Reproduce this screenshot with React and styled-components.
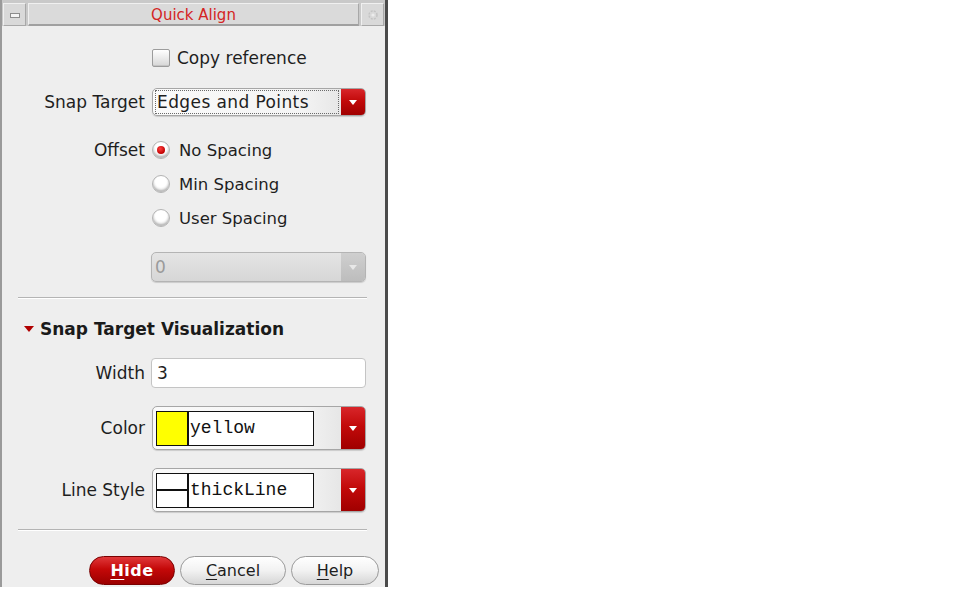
import React from "react";
import styled, { createGlobalStyle, css } from "styled-components";

const Global = createGlobalStyle`
  html, body { margin: 0; padding: 0; background: #ffffff; }
  body { font-family: "DejaVu Sans", "Noto Sans", sans-serif; }
`;

const Window = styled.div`
  box-sizing: border-box;
  width: 388px;
  height: 587px;
  display: flex;
  flex-direction: column;
  background: #c9c9c9;
  border-left: 2px solid #9a9a9a;
  border-right: 3px solid #4b4b4b;
  padding-top: 3px;
`;

const TitleBar = styled.div`
  display: flex;
  gap: 2px;
  height: 23px;
  padding: 0 1px 0 1px;
  background: #c9c9c9;
`;

const TitleButton = styled.div`
  box-sizing: border-box;
  width: 23px;
  display: flex;
  align-items: center;
  justify-content: center;
  background: #d9d9d9;
  border-top: 1px solid #f0f0f0;
  border-left: 1px solid #f0f0f0;
  border-right: 1px solid #a8a8a8;
  border-bottom: 1px solid #a8a8a8;
`;

const MinGlyph = styled.div`
  width: 8px;
  height: 3px;
  background: #f4f4f4;
  border: 1px solid #8c8c8c;
  margin-top: 2px;
`;

const TitleText = styled.div`
  box-sizing: border-box;
  flex: 1;
  display: flex;
  align-items: center;
  justify-content: center;
  background: #dadada;
  border-top: 1px solid #f0f0f0;
  border-left: 1px solid #f0f0f0;
  border-right: 1px solid #a8a8a8;
  border-bottom: 2px solid #a0a0a0;
  color: #d42424;
  font-size: 15px;
  padding-top: 1px;
`;

const Body = styled.div`
  flex: 1;
  display: flex;
  flex-direction: column;
  background: #eeeeee;
  color: #1e1e1e;
  font-size: 17px;
`;

const FormRow = styled.div`
  display: grid;
  grid-template-columns: 143px 214px;
  column-gap: 7px;
  align-items: center;
  margin-top: ${(p) => p.$mt}px;
`;

const Label = styled.div`
  text-align: right;
  white-space: nowrap;
  color: #1e1e1e;
`;

const CheckLabel = styled.label`
  display: flex;
  align-items: center;
  gap: 7px;
  height: 18px;
  white-space: nowrap;
`;

const CheckBox = styled.span`
  box-sizing: border-box;
  width: 18px;
  height: 18px;
  border: 1px solid #9c9c9c;
  border-radius: 2px;
  background: linear-gradient(#ffffff, #d6d6d6);
  box-shadow: inset 0 -1px 0 #c4c4c4;
`;

const RadioLabel = styled.label`
  display: flex;
  align-items: center;
  gap: 9px;
  height: 20px;
  white-space: nowrap;
  font-size: 16.5px;
`;

const RadioDot = styled.span`
  box-sizing: border-box;
  width: 18px;
  height: 18px;
  border-radius: 50%;
  border: 1px solid #b4b4b4;
  background: radial-gradient(circle at 50% 35%, #ffffff 40%, #dcdcdc 100%);
  box-shadow: inset 0 -2px 2px #b8b8b8;
  display: flex;
  align-items: center;
  justify-content: center;
  ${(p) =>
    p.$checked &&
    css`
      &::after {
        content: "";
        width: 8px;
        height: 8px;
        border-radius: 50%;
        background: radial-gradient(circle at 40% 35%, #ff4040, #c00000 70%);
      }
    `}
`;

const Combo = styled.div`
  box-sizing: border-box;
  width: ${(p) => p.$w || 214}px;
  height: ${(p) => p.$h}px;
  display: flex;
  border: 1px solid ${(p) => (p.$disabled ? "#b4b4b4" : "#a6a6a6")};
  border-radius: 5px;
  overflow: hidden;
  background: ${(p) =>
    p.$disabled
      ? "linear-gradient(#e4e4e4, #d6d6d6)"
      : "linear-gradient(90deg, #fafafa 0%, #f4f4f4 70%, #dedede 100%)"};
  box-shadow: 0 1px 1px rgba(0, 0, 0, 0.15);
`;

const ComboField = styled.div`
  flex: 1;
  display: flex;
  align-items: center;
  padding: 0 2px 0 3px;
  min-width: 0;
  color: ${(p) => (p.$disabled ? "#9a9a9a" : "#1e1e1e")};
`;

const FocusRect = styled.div`
  box-sizing: border-box;
  flex: 1;
  height: 24px;
  display: flex;
  align-items: center;
  border: 1px dotted #6a6a6a;
  margin-left: -1px;
  padding-left: 1px;
  letter-spacing: 0.4px;
  white-space: nowrap;
`;

const ComboArrow = styled.div`
  width: 24px;
  display: flex;
  align-items: center;
  justify-content: center;
  background: ${(p) =>
    p.$disabled
      ? "linear-gradient(#cfcfcf, #bdbdbd)"
      : "linear-gradient(#d8262a 0%, #c20a0a 45%, #a00000 100%)"};
  &::after {
    content: "";
    width: 0;
    height: 0;
    border-left: 4px solid transparent;
    border-right: 4px solid transparent;
    border-top: 5px solid ${(p) => (p.$disabled ? "#e8e8e8" : "#ffffff")};
  }
`;

const ValueBox = styled.div`
  box-sizing: border-box;
  width: 158px;
  height: 35px;
  display: flex;
  border: 1px solid #111111;
  background: #ffffff;
`;

const Swatch = styled.div`
  width: 30px;
  border-right: 2px solid #111111;
  background: ${(p) => p.$color || "transparent"};
  display: flex;
  align-items: center;
  &::after {
    content: "";
    display: ${(p) => (p.$line ? "block" : "none")};
    width: 100%;
    height: 2px;
    background: #111111;
  }
`;

const MonoText = styled.span`
  font-family: "Liberation Mono", "Courier New", monospace;
  font-size: 18px;
  color: #111111;
  align-self: center;
  padding-left: 1px;
`;

const TextInput = styled.div`
  box-sizing: border-box;
  width: 215px;
  height: 30px;
  margin-left: -1px;
  display: flex;
  align-items: center;
  padding-left: 5px;
  background: #ffffff;
  border: 1px solid #c4c4c4;
  border-radius: 4px;
  color: #1e1e1e;
`;

const Separator = styled.div`
  margin: ${(p) => p.$mt}px 18px 0 16px;
  border-top: 1px solid #b4b4b4;
  border-bottom: 1px solid #ffffff;
`;

const SectionHeader = styled.div`
  display: flex;
  align-items: center;
  gap: 6px;
  height: 20px;
  margin-top: ${(p) => p.$mt}px;
  padding-left: 22px;
  font-weight: bold;
  color: #1a1a1a;
  &::before {
    content: "";
    width: 0;
    height: 0;
    border-left: 5px solid transparent;
    border-right: 5px solid transparent;
    border-top: 6px solid #b00000;
    margin-top: -1px;
  }
`;

const ButtonBar = styled.div`
  display: flex;
  justify-content: flex-end;
  gap: 5px;
  padding-right: 6px;
  margin-top: ${(p) => p.$mt}px;
`;

const PillButton = styled.button`
  box-sizing: border-box;
  width: ${(p) => p.$w}px;
  height: 29px;
  border-radius: 15px;
  font-family: "DejaVu Sans", sans-serif;
  font-size: 16px;
  padding: 0;
  cursor: pointer;
  ${(p) =>
    p.$primary
      ? css`
          border: 1px solid #7a0000;
          background: linear-gradient(#e0383a 0%, #c40808 45%, #9c0000 100%);
          color: #ffffff;
          font-weight: bold;
          letter-spacing: 0.5px;
        `
      : css`
          border: 1px solid #9a9a9a;
          background: linear-gradient(#ffffff 0%, #f2f2f2 50%, #d6d6d6 100%);
          color: #1e1e1e;
        `}
`;

const Mnemonic = styled.span`
  text-decoration: underline;
  text-underline-offset: 3px;
`;

function Gear() {
  return (
    <svg width="12" height="12" viewBox="0 0 12 12">
      <circle cx="6" cy="6" r="4" fill="none" stroke="#c4c4c4" strokeWidth="1.5" strokeDasharray="2 1.2" />
      <circle cx="6" cy="6" r="1.6" fill="#ececec" />
    </svg>
  );
}

export default function App() {
  return (
    <>
      <Global />
      <Window>
        <TitleBar>
          <TitleButton>
            <MinGlyph />
          </TitleButton>
          <TitleText>Quick Align</TitleText>
          <TitleButton>
            <Gear />
          </TitleButton>
        </TitleBar>
        <Body>
          <FormRow $mt={23}>
            <Label />
            <CheckLabel>
              <CheckBox />
              Copy reference
            </CheckLabel>
          </FormRow>

          <FormRow $mt={21}>
            <Label>Snap Target</Label>
            <Combo $h={28}>
              <ComboField>
                <FocusRect>Edges and Points</FocusRect>
              </ComboField>
              <ComboArrow />
            </Combo>
          </FormRow>

          <FormRow $mt={24}>
            <Label>Offset</Label>
            <RadioLabel>
              <RadioDot $checked />
              No Spacing
            </RadioLabel>
          </FormRow>
          <FormRow $mt={14}>
            <Label />
            <RadioLabel>
              <RadioDot />
              Min Spacing
            </RadioLabel>
          </FormRow>
          <FormRow $mt={14}>
            <Label />
            <RadioLabel>
              <RadioDot />
              User Spacing
            </RadioLabel>
          </FormRow>

          <FormRow $mt={24}>
            <Label />
            <Combo $h={30} $w={215} $disabled style={{ marginLeft: -1 }}>
              <ComboField $disabled>0</ComboField>
              <ComboArrow $disabled />
            </Combo>
          </FormRow>

          <Separator $mt={15} />

          <SectionHeader $mt={20}>Snap Target Visualization</SectionHeader>

          <FormRow $mt={19}>
            <Label>Width</Label>
            <TextInput>3</TextInput>
          </FormRow>

          <FormRow $mt={18}>
            <Label>Color</Label>
            <Combo $h={44}>
              <ComboField>
                <ValueBox>
                  <Swatch $color="#ffff00" />
                  <MonoText>yellow</MonoText>
                </ValueBox>
              </ComboField>
              <ComboArrow />
            </Combo>
          </FormRow>

          <FormRow $mt={18}>
            <Label>Line Style</Label>
            <Combo $h={44}>
              <ComboField>
                <ValueBox>
                  <Swatch $line />
                  <MonoText>thickLine</MonoText>
                </ValueBox>
              </ComboField>
              <ComboArrow />
            </Combo>
          </FormRow>

          <Separator $mt={17} />

          <ButtonBar $mt={25}>
            <PillButton $primary $w={86}>
              <Mnemonic>H</Mnemonic>ide
            </PillButton>
            <PillButton $w={106}>
              <Mnemonic>C</Mnemonic>ancel
            </PillButton>
            <PillButton $w={88}>
              <Mnemonic>H</Mnemonic>elp
            </PillButton>
          </ButtonBar>
        </Body>
      </Window>
    </>
  );
}
